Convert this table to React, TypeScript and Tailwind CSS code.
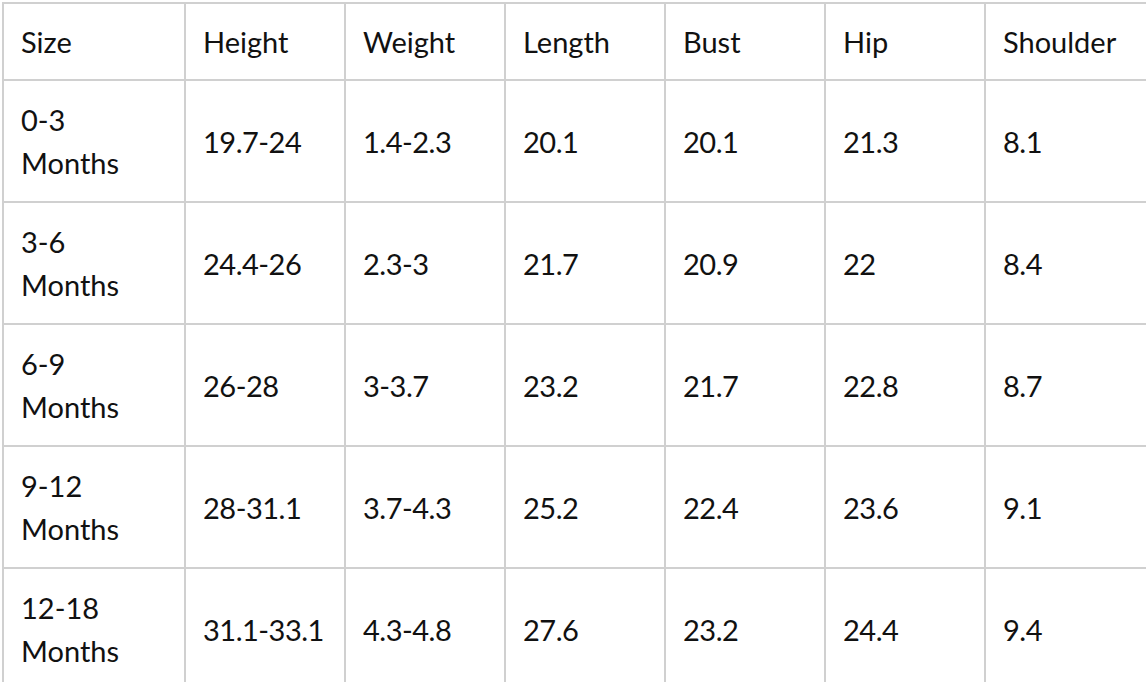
const HEADERS = ["Size", "Height", "Weight", "Length", "Bust", "Hip", "Shoulder"];

const ROWS = [
  ["0-3 Months", "19.7-24", "1.4-2.3", "20.1", "20.1", "21.3", "8.1"],
  ["3-6 Months", "24.4-26", "2.3-3", "21.7", "20.9", "22", "8.4"],
  ["6-9 Months", "26-28", "3-3.7", "23.2", "21.7", "22.8", "8.7"],
  ["9-12 Months", "28-31.1", "3.7-4.3", "25.2", "22.4", "23.6", "9.1"],
  ["12-18 Months", "31.1-33.1", "4.3-4.8", "27.6", "23.2", "24.4", "9.4"],
];

export default function App() {
  return (
    <div className="min-h-screen bg-white pl-[2px] pt-[2px] overflow-hidden">
      <table
        className="table-fixed border-collapse w-[1144px] text-[#111] text-[29px] leading-[43px]"
        style={{ fontFamily: "Lato, 'Open Sans', sans-serif" }}
      >
        <colgroup>
          <col className="w-[182px]" />
          <col className="w-[160px]" />
          <col className="w-[160px]" />
          <col className="w-[160px]" />
          <col className="w-[160px]" />
          <col className="w-[160px]" />
          <col className="w-[162px]" />
        </colgroup>
        <thead>
          <tr className="h-[77px]">
            {HEADERS.map((h) => (
              <th
                key={h}
                className="border-2 border-[#d0d0d0] px-[17px] text-left font-normal align-middle"
              >
                {h}
              </th>
            ))}
          </tr>
        </thead>
        <tbody>
          {ROWS.map((row) => (
            <tr key={row[0]} className="h-[122px]">
              {row.map((cell, i) => (
                <td
                  key={i}
                  className={
                    i === 0
                      ? "border-2 border-[#d0d0d0] px-[17px] align-middle"
                      : "border-2 border-[#d0d0d0] px-[17px] align-middle whitespace-nowrap tracking-[-0.5px]"
                  }
                >
                  {i === 0 ? (
                    <>
                      {cell.split(" ")[0]}
                      <br />
                      {cell.split(" ")[1]}
                    </>
                  ) : (
                    cell
                  )}
                </td>
              ))}
            </tr>
          ))}
        </tbody>
      </table>
    </div>
  );
}
